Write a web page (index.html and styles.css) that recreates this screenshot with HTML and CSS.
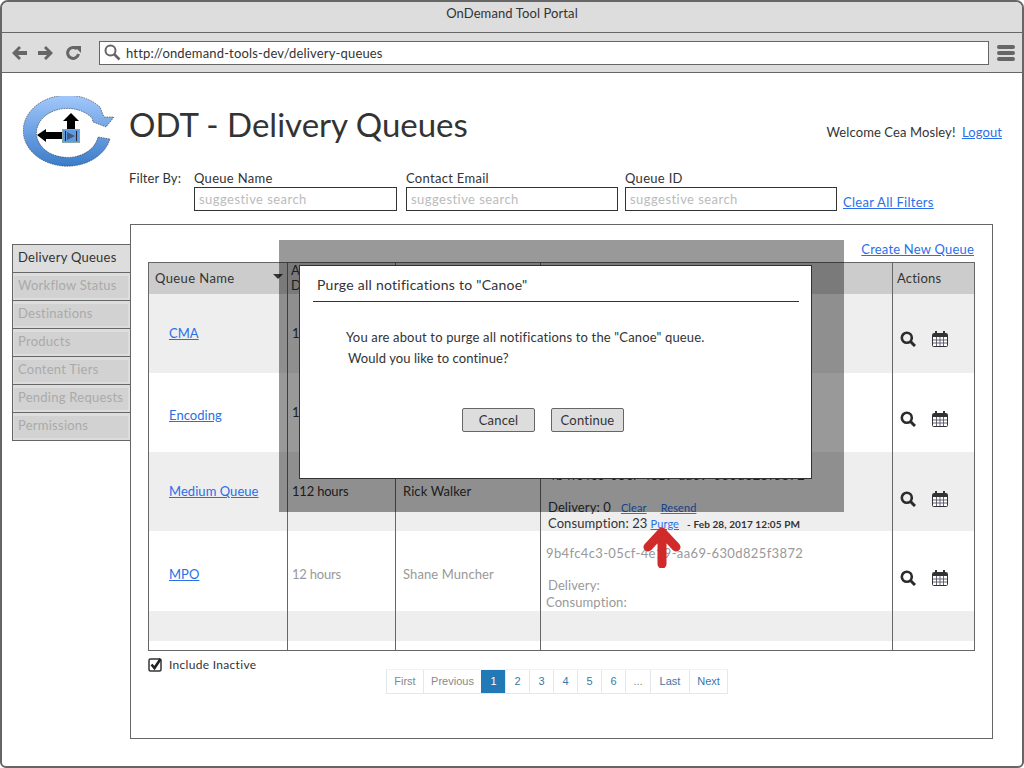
FILE: index.html
```html
<!DOCTYPE html>
<html lang="en">
<head>
    <meta charset="UTF-8">
    <title>OnDemand Tool Portal</title>
    <link rel="stylesheet" href="styles.css">
</head>
<body>
<div class="window">
    <div class="titlebar">OnDemand Tool Portal</div>
    <div class="toolbar">
        <svg class="nav-icons" width="72" height="16" viewBox="0 0 72 16">
            <path d="M1 8 L8 1 L10 3 L7 6 L16 6 L16 10 L7 10 L10 13 L8 15 Z" fill="#666"/>
            <path d="M42 8 L35 1 L33 3 L36 6 L27 6 L27 10 L36 10 L33 13 L35 15 Z" fill="#666"/>
            <path d="M66 4 A5.5 5.5 0 1 0 67.5 9" fill="none" stroke="#666" stroke-width="3"/>
            <path d="M63 1 L70 1 L70 8 Z" fill="#666"/>
        </svg>
        <div class="urlbar">
            <svg width="17" height="17" viewBox="0 0 17 17">
                <circle cx="6.5" cy="6.5" r="5" fill="none" stroke="#666" stroke-width="2"/>
                <path d="M10 10 L15.5 15.5" stroke="#666" stroke-width="2.6"/>
            </svg>
            <span>http://ondemand-tools-dev/delivery-queues</span>
        </div>
        <div class="hamburger"><i></i><i></i><i></i></div>
    </div>

    <div class="page">
        <div class="head">
            <svg class="logo" width="92" height="73" viewBox="0 0 92 73">
                <defs>
                    <linearGradient id="ring" x1="0" y1="0" x2="0" y2="1">
                        <stop offset="0" stop-color="#a3c8fb"/>
                        <stop offset="1" stop-color="#3a7cca"/>
                    </linearGradient>
                </defs>
                <path d="M77 11 A44 35.500 0 1 0 87 43 L75 41 A31 24.500 0 1 1 69 22 L70 26 L83 31 L91 21 L81 21 Z" fill="url(#ring)" stroke="#333" stroke-width=".6" stroke-dasharray="1.5 1"/>
                <path d="M14 39 L23 33 L23 36 L40 36 L40 43 L23 43 L23 46 Z" fill="#000"/>
                <path d="M48 17 L56 25 L52 25 L52 33 L44 33 L44 25 L40 25 Z" fill="#000"/>
                <rect x="39.500" y="33.500" width="17" height="13" fill="#5f9be0" stroke="#8aa"/>
                <path d="M44 36 L52 40 L44 44 Z" fill="#3e5a80"/>
                <path d="M42.500 35 V45 M53.500 35 V45" stroke="#223" stroke-width="1"/>
            </svg>
            <div class="head-main">
                <div class="title-row">
                    <h1>ODT - Delivery Queues</h1>
                    <div class="welcome">Welcome Cea Mosley! <a href="#">Logout</a></div>
                </div>
                <div class="filters">
                    <span class="filter-by">Filter By:</span>
                    <label class="filter filter-name">Queue Name<input placeholder="suggestive search"></label>
                    <label class="filter filter-email">Contact Email<input placeholder="suggestive search"></label>
                    <label class="filter filter-id">Queue ID<input placeholder="suggestive search"></label>
                    <a class="clear-all" href="#">Clear All Filters</a>
                </div>
            </div>
        </div>

        <div class="main">
            <ul class="tabs">
                <li class="active"><span>Delivery Queues</span></li>
                <li><span>Workflow Status</span></li>
                <li><span>Destinations</span></li>
                <li><span>Products</span></li>
                <li><span>Content Tiers</span></li>
                <li><span>Pending Requests</span></li>
                <li><span>Permissions</span></li>
            </ul>

            <div class="box">
                <div class="create-row"><a href="#">Create New Queue</a></div>
                <table class="queues">
                    <colgroup>
                        <col class="c1"><col class="c2"><col class="c3"><col class="c4"><col class="c5">
                    </colgroup>
                    <thead>
                        <tr>
                            <th>Queue Name <i class="sort"></i></th>
                            <th class="th-alert">Avg<br>Del</th>
                            <th></th>
                            <th></th>
                            <th class="th-actions">Actions</th>
                        </tr>
                    </thead>
                    <tbody>
                        <tr class="even r1">
                            <td class="name"><a href="#">CMA</a></td>
                            <td class="hours">14 hours</td>
                            <td></td>
                            <td></td>
                            <td class="actions"><svg class="ic"><use href="#i-search"/></svg><svg class="ic"><use href="#i-cal"/></svg></td>
                        </tr>
                        <tr class="r2">
                            <td class="name"><a href="#">Encoding</a></td>
                            <td class="hours">12 hours</td>
                            <td></td>
                            <td></td>
                            <td class="actions"><svg class="ic"><use href="#i-search"/></svg><svg class="ic"><use href="#i-cal"/></svg></td>
                        </tr>
                        <tr class="even r3">
                            <td class="name"><a href="#">Medium Queue</a></td>
                            <td class="hours">112 hours</td>
                            <td class="contact">Rick Walker</td>
                            <td class="detail">
                                <div class="guid">4b4fc4c3-05cf-4e19-aa69-630d825f3872</div>
                                <div class="count">Delivery: 0<a class="small first" href="#">Clear</a><a class="small second" href="#">Resend</a></div>
                                <div class="count">Consumption: 23<a class="small third" href="#">Purge</a><span class="stamp">- Feb 28, 2017 12:05 PM</span></div>
                            </td>
                            <td class="actions"><svg class="ic"><use href="#i-search"/></svg><svg class="ic"><use href="#i-cal"/></svg></td>
                        </tr>
                        <tr class="inactive r4">
                            <td class="name"><a href="#">MPO</a></td>
                            <td class="hours">12 hours</td>
                            <td class="contact">Shane Muncher</td>
                            <td class="detail">
                                <div class="guid">9b4fc4c3-05cf-4e19-aa69-630d825f3872</div>
                                <div class="count indent">Delivery:</div>
                                <div class="count">Consumption:</div>
                            </td>
                            <td class="actions"><svg class="ic"><use href="#i-search"/></svg><svg class="ic"><use href="#i-cal"/></svg></td>
                        </tr>
                        <tr class="even r5"><td></td><td></td><td></td><td></td><td></td></tr>
                        <tr class="r6"><td></td><td></td><td></td><td></td><td></td></tr>
                    </tbody>
                </table>
                <div class="table-foot">
                    <label class="include">
                        <svg width="14" height="15" viewBox="0 0 14 15">
                            <rect x="1" y="2" width="12" height="12" rx="1.500" fill="#fff" stroke="#333" stroke-width="1.500"/>
                            <path d="M3.500 7.500 L6.500 11 L12.500 2" fill="none" stroke="#222" stroke-width="2.600"/>
                        </svg>
                        Include Inactive
                    </label>
                    <div class="pager">
                        <a class="off pg-first">First</a>
                        <a class="off pg-prev">Previous</a>
                        <a class="current pg-n">1</a>
                        <a class="pg-n">2</a>
                        <a class="pg-n">3</a>
                        <a class="pg-n">4</a>
                        <a class="pg-n">5</a>
                        <a class="pg-n">6</a>
                        <a class="off pg-dots">...</a>
                        <a class="pg-last">Last</a>
                        <a class="pg-next">Next</a>
                    </div>
                </div>
            </div>
        </div>

        <div class="shade"></div>
        <div class="modal">
            <h2>Purge all notifications to "Canoe"</h2>
            <p class="msg-1">You are about to purge all notifications to the "Canoe" queue.</p>
            <p class="msg-2">Would you like to continue?</p>
            <div class="modal-buttons">
                <button>Cancel</button>
                <button>Continue</button>
            </div>
        </div>
        <svg class="red-arrow" width="38" height="42" viewBox="0 0 38 42">
            <path d="M19 38 V6 M5 21 L19 6 L33 21" fill="none" stroke="#d12a2a" stroke-width="9" stroke-linejoin="round" stroke-linecap="round"/>
        </svg>
    </div>
</div>

<!-- icones das acoes -->
<svg class="defs" width="0" height="0">
    <symbol id="i-search" viewBox="0 0 16 16">
        <circle cx="6.800" cy="6.800" r="5" fill="none" stroke="#2b2b2b" stroke-width="2.600"/>
        <path d="M10.500 10.500 L15 15" stroke="#2b2b2b" stroke-width="3"/>
    </symbol>
    <symbol id="i-cal" viewBox="0 0 16 16">
        <rect x=".5" y="2.500" width="15" height="13" rx="1" fill="#fff" stroke="#333"/>
        <rect x="1" y="3" width="14" height="3" fill="#333"/>
        <path d="M4 0 V4 M12 0 V4" stroke="#333" stroke-width="2"/>
        <path d="M1 9 H15 M1 12 H15 M4.500 6 V15 M8 6 V15 M11.500 6 V15" stroke="#556" stroke-width=".9"/>
    </symbol>
</svg>
</body>
</html>
```

FILE: styles.css
```css
* {
    box-sizing: border-box;
}

body {
    margin: 0;
    font-family: Lato, "Noto Sans", sans-serif;
    font-size: 13px;
    color: #333;
    background: #fff;
}

a {
    color: #2a6fe8;
    text-decoration: underline;
}

.window {
    width: 1024px;
    height: 768px;
    border: 2px solid #666;
    border-radius: 8px 8px 6px 6px;
    display: flex;
    flex-direction: column;
    overflow: hidden;
}

.titlebar {
    height: 31px;
    background: #ddd;
    border-bottom: 1px solid #666;
    text-align: center;
    line-height: 22px;
    letter-spacing: .1px;
}

.toolbar {
    height: 40px;
    background: #ddd;
    border-bottom: 1px solid #666;
    display: flex;
    align-items: center;
    padding-left: 9px;
    flex-shrink: 0;
}

.nav-icons {
    margin-right: 16px;
}

.urlbar {
    width: 890px;
    height: 24px;
    background: #fff;
    border: 1px solid #666;
    display: flex;
    align-items: center;
    padding-left: 4px;
    gap: 5px;
    font-size: 13px;
    letter-spacing: .16px;
}

.hamburger {
    margin-left: 8px;
    width: 18px;
    display: flex;
    flex-direction: column;
    gap: 2px;
}

.hamburger i {
    height: 4px;
    border-radius: 2px;
    background: #666;
}

.page {
    position: relative;
    flex: 1;
}

.head {
    height: 151px;
    display: flex;
    padding-left: 21px;
}

.logo {
    margin-top: 23px;
    margin-right: 14px;
}

.head-main {
    flex: 1;
}

.title-row {
    height: 95px;
    display: flex;
    align-items: flex-start;
}

h1 {
    margin: 28px 0 0;
    font-size: 33px;
    font-weight: 400;
    line-height: 46px;
}

.welcome {
    margin-left: auto;
    margin-right: 20px;
    margin-top: 50px;
    line-height: 18px;
    letter-spacing: .1px;
}

.welcome a {
    margin-left: 3px;
}

.filters {
    display: flex;
    letter-spacing: .3px;
}

.filter-by {
    width: 65px;
    line-height: 18px;
    margin-top: 1px;
    letter-spacing: .1px;
}

.filter {
    display: block;
    line-height: 18px;
    margin-top: 1px;
}

.filter input {
    display: block;
    height: 24px;
    width: 100%;
    margin: 0;
    border: 1px solid #333;
    padding: 0 4px;
    font: 13px Lato, "Noto Sans", sans-serif;
    letter-spacing: .45px;
    outline: none;
}

.filter input::placeholder {
    color: #bbb;
    opacity: 1;
}

.filter-name {
    width: 203px;
    margin-right: 9px;
}

.filter-email {
    width: 212px;
    margin-right: 7px;
}

.filter-id {
    width: 212px;
    margin-right: 6px;
}

.clear-all {
    margin-top: 25px;
    line-height: 18px;
    letter-spacing: .28px;
}

.main {
    display: flex;
    align-items: flex-start;
    padding-left: 10px;
}

.tabs {
    list-style: none;
    margin: 20px 0 0;
    padding: 0;
    width: 118px;
    border: 1px solid #666;
    border-right: none;
    background: #ddd;
}

.tabs li {
    height: 28px;
    border-bottom: 1px solid #666;
    padding: 3px 2px 2px 1px;
    letter-spacing: .25px;
    white-space: nowrap;
}

.tabs li:last-child {
    height: 27px;
    border-bottom: none;
}

.tabs span {
    display: block;
    height: 22px;
    line-height: 19px;
    padding-left: 4px;
    background: #d2d2d2;
    color: #aaa;
}

.tabs .active span {
    background: #ddd;
    color: #333;
}

.box {
    width: 863px;
    height: 515px;
    border: 1px solid #666;
    padding: 0 17px;
}

.create-row {
    height: 37px;
    text-align: right;
    padding-top: 15px;
    padding-right: 1px;
    line-height: 18px;
    letter-spacing: .2px;
}

.queues {
    width: 826px;
    table-layout: fixed;
    border-collapse: collapse;
    border: 1px solid #666;
}

.c1 { width: 139px; }
.c2 { width: 108px; }
.c3 { width: 145px; }
.c4 { width: 352px; }
.c5 { width: 82px; }

.queues th {
    height: 31px;
    background: #ccc;
    border-left: 1px solid #666;
    padding: 0 6px;
    text-align: left;
    font-weight: 400;
    letter-spacing: .4px;
    position: relative;
}

.queues .th-alert {
    padding-left: 3px;
    line-height: 15px;
}

.queues .th-actions {
    padding-left: 4px;
    letter-spacing: .2px;
}

.sort {
    position: absolute;
    right: 4px;
    top: 11px;
    border: 5px solid transparent;
    border-top: 5px solid #333;
}

.queues td {
    padding: 0;
    border-left: 1px solid #666;
    letter-spacing: .1px;
    overflow: hidden;
    white-space: nowrap;
}

.queues tbody tr {
    height: 79px;
}

.queues tbody .r5 {
    height: 30px;
}

.queues tbody .r6 {
    height: 10px;
}

.even td {
    background: #eee;
}

.queues .name {
    padding-left: 20px;
    letter-spacing: .05px;
}

.queues .r2 .name {
    padding-top: 5px;
}

.queues .r4 .name,
.queues .r4 .hours,
.queues .r4 .contact {
    padding-top: 6px;
}

.queues .hours {
    padding-left: 4px;
    letter-spacing: -.2px;
}

.queues .contact {
    padding-left: 7px;
}

.inactive .hours,
.inactive .contact,
.inactive .detail {
    color: #999;
}

.queues .detail {
    padding-left: 5px;
    vertical-align: top;
}

.guid {
    letter-spacing: .37px;
    line-height: 16px;
}

.queues .r3 .detail {
    padding-top: 15px;
    padding-left: 7px;
}

.r3 .guid {
    height: 32px;
}

.queues .r4 .detail {
    padding-top: 14px;
}

.r4 .guid {
    height: 32px;
}

.count {
    height: 17px;
    line-height: 17px;
}

.r3 .count {
    height: 16px;
    line-height: 16px;
}

.indent {
    margin-left: 2px;
}

.small {
    font-size: 11px;
}

.first {
    margin-left: 10px;
}

.second {
    margin-left: 14px;
}

.third {
    margin-left: 3px;
}

.stamp {
    font-size: 10px;
    font-weight: 700;
    margin-left: 8px;
}

.queues .actions {
    padding: 12px 0 0 7px;
}

.queues .r1 .actions {
    padding-top: 10px;
}

.queues .r3 .actions,
.queues .r4 .actions {
    padding-top: 14px;
}

.ic {
    width: 16px;
    height: 16px;
    margin-right: 16px;
    vertical-align: middle;
}

.defs {
    position: absolute;
}

.table-foot {
    display: flex;
    align-items: flex-start;
    padding-top: 6px;
}

.include {
    width: 238px;
    display: flex;
    align-items: center;
    gap: 7px;
    letter-spacing: .3px;
    font-size: 12px;
}

.pager {
    display: flex;
    height: 25px;
    margin-top: 12px;
    border-bottom: 1px solid #e4e8ea;
    border-right: 1px solid #e4e8ea;
    border-top: 1px solid #f2f2f2;
    font: 11px "Liberation Sans", sans-serif;
    color: #3a78a8;
}

.pager a {
    color: #3a78a8;
    text-decoration: none;
    text-align: center;
    line-height: 23px;
    border-left: 1px solid #e4e8ea;
}

.pager .off {
    color: #888;
}

.pager .current {
    background: #2179b5;
    color: #fff;
    border-left-color: #2179b5;
}

.pg-first { width: 37px; }
.pg-prev { width: 58px; }
.pg-n { width: 24px; }
.pg-dots { width: 25px; }
.pg-last { width: 39px; }
.pg-next { width: 38px; }

.shade {
    position: absolute;
    left: 277px;
    top: 167px;
    width: 565px;
    height: 272px;
    background: rgba(0, 0, 0, .4);
}

.modal {
    position: absolute;
    left: 297px;
    top: 192px;
    width: 513px;
    height: 214px;
    background: #fff;
    border: 1px solid #333;
}

.modal h2 {
    margin: 10px 12px 0 13px;
    padding: 0 0 7px 4px;
    font-size: 14px;
    line-height: 18px;
    font-weight: 400;
    letter-spacing: .25px;
    border-bottom: 1px solid #333;
}

.modal p {
    margin: 0;
    line-height: 21px;
    letter-spacing: .16px;
}

.msg-1 {
    padding: 25px 0 0 46px;
}

.modal .msg-2 {
    padding-left: 48px;
    letter-spacing: .08px;
}

.modal-buttons {
    display: flex;
    gap: 16px;
    margin: 39px 0 0 162px;
}

.modal-buttons button {
    width: 73px;
    height: 24px;
    background: #ddd;
    border: 1px solid #666;
    border-radius: 2px;
    padding: 0;
    font: 13px Lato, "Noto Sans", sans-serif;
    letter-spacing: .2px;
    color: #333;
}

.red-arrow {
    position: absolute;
    left: 641px;
    top: 453px;
}
```
